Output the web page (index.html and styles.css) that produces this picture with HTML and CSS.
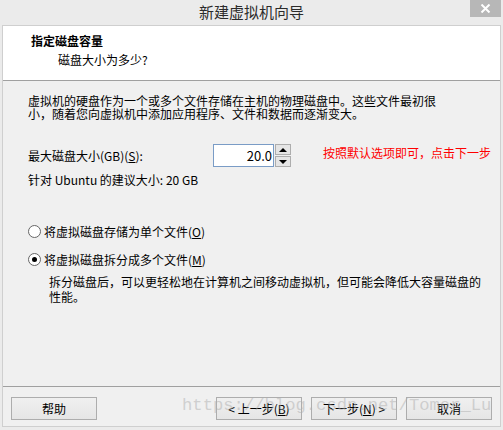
FILE: index.html
```html
<!DOCTYPE html>
<html lang="zh-CN">
<head>
    <meta charset="UTF-8">
    <title>新建虚拟机向导</title>
    <link rel="stylesheet" href="styles.css">
</head>
<body>
    <div class="window">
        <div class="titlebar">
            <span></span>
            <div class="title">新建虚拟机向导</div>
            <div class="close">
                <svg width="11" height="9" viewBox="0 0 11 9"><path d="M1.5 0.5 L9.5 8.5 M9.5 0.5 L1.5 8.5" stroke="#fff" stroke-width="2"/></svg>
            </div>
        </div>

        <div class="frame">
            <div class="header">
                <div class="heading">指定磁盘容量</div>
                <div class="subheading">磁盘大小为多少?</div>
            </div>

            <div class="content">
                <p class="intro">虚拟机的硬盘作为一个或多个文件存储在主机的物理磁盘中。这些文件最初很小，随着您向虚拟机中添加应用程序、文件和数据而逐渐变大。</p>

                <div class="size-row">
                    <label class="size-label">最大磁盘大小(GB)(<u>S</u>):</label>
                    <div class="spin">
                        <div class="spin-value">20.0</div>
                        <div class="spin-buttons">
                            <div class="spin-btn"><span class="arrow-up"></span></div>
                            <div class="spin-btn"><span class="arrow-down"></span></div>
                        </div>
                    </div>
                    <div class="note">按照默认选项即可，点击下一步</div>
                </div>

                <div class="hint">针对 Ubuntu 的建议大小: 20 GB</div>

                <div class="option first">
                    <span class="radio"></span>
                    <span>将虚拟磁盘存储为单个文件(<u>O</u>)</span>
                </div>
                <div class="option">
                    <span class="radio checked"></span>
                    <span>将虚拟磁盘拆分成多个文件(<u>M</u>)</span>
                </div>
                <p class="option-desc">拆分磁盘后，可以更轻松地在计算机之间移动虚拟机，但可能会降低大容量磁盘的性能。</p>
            </div>

            <div class="footer">
                <button class="btn">帮助</button>
                <div class="footer-right">
                    <button class="btn">&lt; 上一步(<u>B</u>)</button>
                    <button class="btn">下一步(<u>N</u>) &gt;</button>
                    <button class="btn">取消</button>
                </div>
            </div>
        </div>

        <div class="watermark">https://blog.csdn.net/Tomor_Lu</div>
    </div>
</body>
</html>
```

FILE: styles.css
```css
body {
    margin: 0;
    font-family: "Noto Sans CJK SC", "Noto Sans", sans-serif;
    font-size: 12px;
    color: #000;
}
.window {
    position: relative;
    width: 503px;
    height: 430px;
    background: #ebebeb;
    display: flex;
    flex-direction: column;
    overflow: hidden;
}
.titlebar {
    height: 25px;
    display: grid;
    grid-template-columns: 33px 1fr 33px;
    align-items: start;
}
.title {
    text-align: center;
    font-size: 15px;
    line-height: 24px;
    color: #2b2b2b;
}
.close {
    width: 31px;
    height: 17px;
    background: #b7b7b7;
    display: flex;
    align-items: center;
    justify-content: center;
}
.frame {
    flex: 1;
    margin: 0 2px 3px;
    border: 1px solid #cfcfcf;
    display: flex;
    flex-direction: column;
}
.header {
    height: 55px;
    background: #fff;
    border-bottom: 1px solid #a0a0a0;
    padding: 7px 0 0 28px;
    box-sizing: border-box;
}
.heading {
    font-weight: bold;
    line-height: 16px;
}
.subheading {
    margin: 3px 0 0 27px;
    line-height: 16px;
}
.content {
    flex: 1;
    background: #f0f0f0;
    padding: 13px 0 0 25px;
}
.intro {
    margin: 0;
    width: 412px;
    line-height: 13px;
}
.size-row {
    display: flex;
    align-items: center;
    margin-top: 24px;
    height: 23px;
}
.size-label {
    width: 185px;
}
.spin {
    display: flex;
    height: 23px;
}
.spin-value {
    width: 58px;
    height: 21px;
    border: 1px solid #7a9cc6;
    background: #fff;
    text-align: right;
    font-size: 13px;
    line-height: 21px;
    padding-right: 1px;
}
.spin-buttons {
    display: flex;
    flex-direction: column;
    gap: 1px;
    margin-left: 1px;
}
.spin-btn {
    width: 14px;
    height: 9px;
    border: 1px solid #adadad;
    background: #e5e5e5;
    display: flex;
    align-items: center;
    justify-content: center;
}
.arrow-up {
    border-left: 4px solid transparent;
    border-right: 4px solid transparent;
    border-bottom: 4px solid #000;
}
.arrow-down {
    border-left: 4px solid transparent;
    border-right: 4px solid transparent;
    border-top: 4px solid #000;
}
.note {
    margin: -7px 0 0 32px;
    color: #ff0000;
    line-height: 13px;
}
.hint {
    margin-top: 6px;
    line-height: 13px;
}
.option {
    display: flex;
    align-items: center;
    gap: 3px;
    line-height: 13px;
    margin-top: 15px;
}
.option.first {
    margin-top: 39px;
}
.radio {
    width: 11px;
    height: 11px;
    border: 1px solid #666;
    border-radius: 50%;
    background: #fff;
    display: flex;
    align-items: center;
    justify-content: center;
}
.radio.checked::after {
    content: "";
    width: 5px;
    height: 5px;
    border-radius: 50%;
    background: #000;
}
.option-desc {
    margin: 8px 0 0 21px;
    width: 434px;
    line-height: 15px;
}
.footer {
    height: 40px;
    border-top: 1px solid #a0a0a0;
    background: #f0f0f0;
    display: flex;
    justify-content: space-between;
    padding: 10px 8px 0;
    box-sizing: border-box;
}
.footer-right {
    display: flex;
    gap: 9px;
}
.btn {
    width: 86px;
    height: 23px;
    border: 1px solid #adadad;
    background: linear-gradient(#f0f0f0, #e5e5e5);
    font-family: inherit;
    font-size: 12px;
    padding: 0;
    color: #000;
}
.watermark {
    position: absolute;
    left: 182px;
    top: 396px;
    font-family: "Liberation Mono", monospace;
    font-size: 17.2px;
    color: rgba(175, 175, 175, 0.5);
    pointer-events: none;
}
```
